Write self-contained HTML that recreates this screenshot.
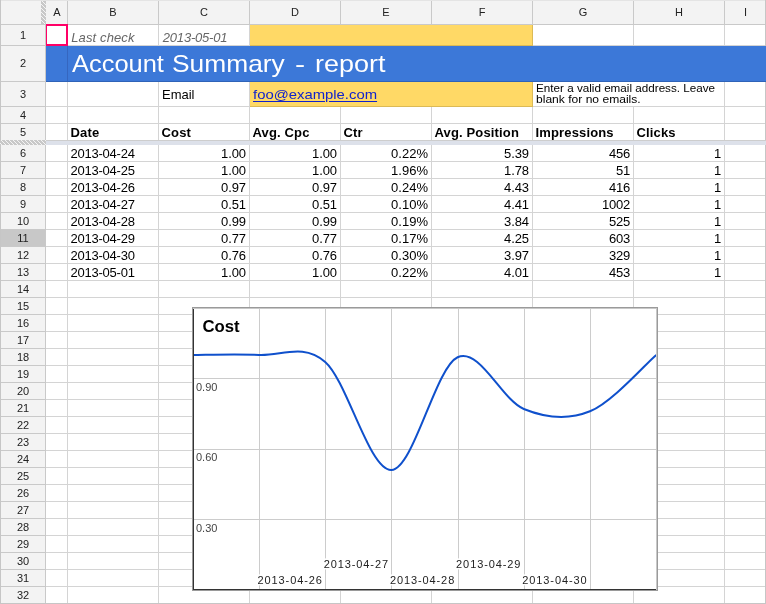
<!DOCTYPE html>
<html><head><meta charset="utf-8"><style>
html,body{margin:0;padding:0;}
body{width:766px;height:604px;overflow:hidden;position:relative;background:#fff;font-family:"Liberation Sans", sans-serif;}
body>div{position:absolute;}
.t{white-space:pre;}
#w{position:absolute;left:0;top:0;width:766px;height:604px;will-change:transform;}
#w>div{position:absolute;}
</style></head><body><div id="w">
<div style="left:0px;top:0px;width:766px;height:24px;background:#f3f3f3;"></div>
<div style="left:0px;top:0px;width:766px;height:1px;background:#e4e4e4;"></div>
<div style="left:0px;top:0px;width:45px;height:604px;background:#f3f3f3;"></div>
<div style="left:0px;top:0px;width:766px;height:1px;background:#e4e4e4;"></div>
<div style="left:1px;top:229px;width:45px;height:18px;background:#c8c8c8;"></div>
<div style="left:250px;top:25px;width:283px;height:21px;background:#ffd966;"></div>
<div style="left:46px;top:46px;width:720px;height:36px;background:#3c78d8;"></div>
<div style="left:250px;top:82px;width:283px;height:25px;background:#ffd966;"></div>
<div style="left:67px;top:1px;width:1px;height:24px;background:#c9c9c9;"></div>
<div style="left:158px;top:1px;width:1px;height:24px;background:#c9c9c9;"></div>
<div style="left:249px;top:1px;width:1px;height:24px;background:#c9c9c9;"></div>
<div style="left:340px;top:1px;width:1px;height:24px;background:#c9c9c9;"></div>
<div style="left:431px;top:1px;width:1px;height:24px;background:#c9c9c9;"></div>
<div style="left:532px;top:1px;width:1px;height:24px;background:#c9c9c9;"></div>
<div style="left:633px;top:1px;width:1px;height:24px;background:#c9c9c9;"></div>
<div style="left:724px;top:1px;width:1px;height:24px;background:#c9c9c9;"></div>
<div style="left:67px;top:25px;width:1px;height:579px;background:#d4d4d4;"></div>
<div style="left:158px;top:25px;width:1px;height:579px;background:#d4d4d4;"></div>
<div style="left:249px;top:25px;width:1px;height:579px;background:#d4d4d4;"></div>
<div style="left:340px;top:25px;width:1px;height:579px;background:#d4d4d4;"></div>
<div style="left:431px;top:25px;width:1px;height:579px;background:#d4d4d4;"></div>
<div style="left:532px;top:25px;width:1px;height:579px;background:#d4d4d4;"></div>
<div style="left:633px;top:25px;width:1px;height:579px;background:#d4d4d4;"></div>
<div style="left:724px;top:25px;width:1px;height:579px;background:#d4d4d4;"></div>
<div style="left:0px;top:24px;width:766px;height:1px;background:#c9c9c9;"></div>
<div style="left:1px;top:45px;width:44px;height:1px;background:#c9c9c9;"></div>
<div style="left:46px;top:45px;width:720px;height:1px;background:#d4d4d4;"></div>
<div style="left:1px;top:81px;width:44px;height:1px;background:#c9c9c9;"></div>
<div style="left:46px;top:81px;width:720px;height:1px;background:#d4d4d4;"></div>
<div style="left:1px;top:106px;width:44px;height:1px;background:#c9c9c9;"></div>
<div style="left:46px;top:106px;width:720px;height:1px;background:#d4d4d4;"></div>
<div style="left:1px;top:123px;width:44px;height:1px;background:#c9c9c9;"></div>
<div style="left:46px;top:123px;width:720px;height:1px;background:#d4d4d4;"></div>
<div style="left:1px;top:161px;width:44px;height:1px;background:#c9c9c9;"></div>
<div style="left:46px;top:161px;width:720px;height:1px;background:#d4d4d4;"></div>
<div style="left:1px;top:178px;width:44px;height:1px;background:#c9c9c9;"></div>
<div style="left:46px;top:178px;width:720px;height:1px;background:#d4d4d4;"></div>
<div style="left:1px;top:195px;width:44px;height:1px;background:#c9c9c9;"></div>
<div style="left:46px;top:195px;width:720px;height:1px;background:#d4d4d4;"></div>
<div style="left:1px;top:212px;width:44px;height:1px;background:#c9c9c9;"></div>
<div style="left:46px;top:212px;width:720px;height:1px;background:#d4d4d4;"></div>
<div style="left:1px;top:229px;width:44px;height:1px;background:#c9c9c9;"></div>
<div style="left:46px;top:229px;width:720px;height:1px;background:#d4d4d4;"></div>
<div style="left:1px;top:246px;width:44px;height:1px;background:#c9c9c9;"></div>
<div style="left:46px;top:246px;width:720px;height:1px;background:#d4d4d4;"></div>
<div style="left:1px;top:263px;width:44px;height:1px;background:#c9c9c9;"></div>
<div style="left:46px;top:263px;width:720px;height:1px;background:#d4d4d4;"></div>
<div style="left:1px;top:280px;width:44px;height:1px;background:#c9c9c9;"></div>
<div style="left:46px;top:280px;width:720px;height:1px;background:#d4d4d4;"></div>
<div style="left:1px;top:297px;width:44px;height:1px;background:#c9c9c9;"></div>
<div style="left:46px;top:297px;width:720px;height:1px;background:#d4d4d4;"></div>
<div style="left:1px;top:314px;width:44px;height:1px;background:#c9c9c9;"></div>
<div style="left:46px;top:314px;width:720px;height:1px;background:#d4d4d4;"></div>
<div style="left:1px;top:331px;width:44px;height:1px;background:#c9c9c9;"></div>
<div style="left:46px;top:331px;width:720px;height:1px;background:#d4d4d4;"></div>
<div style="left:1px;top:348px;width:44px;height:1px;background:#c9c9c9;"></div>
<div style="left:46px;top:348px;width:720px;height:1px;background:#d4d4d4;"></div>
<div style="left:1px;top:365px;width:44px;height:1px;background:#c9c9c9;"></div>
<div style="left:46px;top:365px;width:720px;height:1px;background:#d4d4d4;"></div>
<div style="left:1px;top:382px;width:44px;height:1px;background:#c9c9c9;"></div>
<div style="left:46px;top:382px;width:720px;height:1px;background:#d4d4d4;"></div>
<div style="left:1px;top:399px;width:44px;height:1px;background:#c9c9c9;"></div>
<div style="left:46px;top:399px;width:720px;height:1px;background:#d4d4d4;"></div>
<div style="left:1px;top:416px;width:44px;height:1px;background:#c9c9c9;"></div>
<div style="left:46px;top:416px;width:720px;height:1px;background:#d4d4d4;"></div>
<div style="left:1px;top:433px;width:44px;height:1px;background:#c9c9c9;"></div>
<div style="left:46px;top:433px;width:720px;height:1px;background:#d4d4d4;"></div>
<div style="left:1px;top:450px;width:44px;height:1px;background:#c9c9c9;"></div>
<div style="left:46px;top:450px;width:720px;height:1px;background:#d4d4d4;"></div>
<div style="left:1px;top:467px;width:44px;height:1px;background:#c9c9c9;"></div>
<div style="left:46px;top:467px;width:720px;height:1px;background:#d4d4d4;"></div>
<div style="left:1px;top:484px;width:44px;height:1px;background:#c9c9c9;"></div>
<div style="left:46px;top:484px;width:720px;height:1px;background:#d4d4d4;"></div>
<div style="left:1px;top:501px;width:44px;height:1px;background:#c9c9c9;"></div>
<div style="left:46px;top:501px;width:720px;height:1px;background:#d4d4d4;"></div>
<div style="left:1px;top:518px;width:44px;height:1px;background:#c9c9c9;"></div>
<div style="left:46px;top:518px;width:720px;height:1px;background:#d4d4d4;"></div>
<div style="left:1px;top:535px;width:44px;height:1px;background:#c9c9c9;"></div>
<div style="left:46px;top:535px;width:720px;height:1px;background:#d4d4d4;"></div>
<div style="left:1px;top:552px;width:44px;height:1px;background:#c9c9c9;"></div>
<div style="left:46px;top:552px;width:720px;height:1px;background:#d4d4d4;"></div>
<div style="left:1px;top:569px;width:44px;height:1px;background:#c9c9c9;"></div>
<div style="left:46px;top:569px;width:720px;height:1px;background:#d4d4d4;"></div>
<div style="left:1px;top:586px;width:44px;height:1px;background:#c9c9c9;"></div>
<div style="left:46px;top:586px;width:720px;height:1px;background:#d4d4d4;"></div>
<div style="left:1px;top:603px;width:44px;height:1px;background:#c9c9c9;"></div>
<div style="left:46px;top:603px;width:720px;height:1px;background:#d4d4d4;"></div>
<div style="left:45px;top:25px;width:1px;height:579px;background:#c9c9c9;"></div>
<div style="left:0px;top:0px;width:1px;height:604px;background:#c6c6c6;"></div>
<div style="left:765px;top:0px;width:1px;height:604px;background:#c6c6c6;"></div>
<div style="left:0px;top:603px;width:766px;height:1px;background:#c6c6c6;"></div>
<div style="left:250px;top:25px;width:282px;height:20px;background:#ffd966;"></div>
<div style="left:532px;top:25px;width:1px;height:21px;background:#dcba55;"></div>
<div style="left:250px;top:45px;width:283px;height:1px;background:#dcba55;"></div>
<div style="left:46px;top:46px;width:720px;height:35px;background:#3c78d8;"></div>
<div style="left:46px;top:81px;width:720px;height:1px;background:#2f63b8;"></div>
<div style="left:67px;top:46px;width:1px;height:35px;background:#3566c0;"></div>
<div style="left:250px;top:82px;width:282px;height:24px;background:#ffd966;"></div>
<div style="left:532px;top:82px;width:1px;height:25px;background:#dcba55;"></div>
<div style="left:250px;top:106px;width:283px;height:1px;background:#dcba55;"></div>
<div style="left:633px;top:82px;width:1px;height:24px;background:#ffffff;"></div>
<svg style="position:absolute;left:41px;top:1px" width="5" height="23" shape-rendering="crispEdges"><defs><pattern id="h1" width="4" height="4" patternUnits="userSpaceOnUse"><rect width="4" height="4" fill="#c8c8c8"/><rect x="1" y="0" width="1" height="1" fill="#f4f4f4"/><rect x="2" y="1" width="1" height="1" fill="#f4f4f4"/><rect x="3" y="2" width="1" height="1" fill="#f4f4f4"/><rect x="0" y="3" width="1" height="1" fill="#f4f4f4"/></pattern></defs><rect width="5" height="23" fill="url(#h1)"/></svg>
<svg style="position:absolute;left:0px;top:140px" width="46" height="5" shape-rendering="crispEdges"><defs><pattern id="h2" width="4" height="4" patternUnits="userSpaceOnUse"><rect width="4" height="4" fill="#c8c8c8"/><rect x="1" y="0" width="1" height="1" fill="#f4f4f4"/><rect x="2" y="1" width="1" height="1" fill="#f4f4f4"/><rect x="3" y="2" width="1" height="1" fill="#f4f4f4"/><rect x="0" y="3" width="1" height="1" fill="#f4f4f4"/></pattern></defs><rect width="46" height="5" fill="url(#h2)"/></svg>
<div style="left:46px;top:140px;width:720px;height:1px;background:#cdcdcd;"></div>
<div style="left:46px;top:141px;width:720px;height:4px;background:#dde1ea;"></div>
<div style="left:46px;top:24px;width:19px;height:18px;border:2px solid #ff0066;border-left-width:1px"></div>
<div class="t" style="left:-43.0px;width:200px;text-align:center;top:5.69px;font-size:11px;line-height:13px;color:#222;font-weight:normal;font-style:normal;letter-spacing:0px;">A</div>
<div class="t" style="left:13.0px;width:200px;text-align:center;top:5.69px;font-size:11px;line-height:13px;color:#222;font-weight:normal;font-style:normal;letter-spacing:0px;">B</div>
<div class="t" style="left:104.0px;width:200px;text-align:center;top:5.69px;font-size:11px;line-height:13px;color:#222;font-weight:normal;font-style:normal;letter-spacing:0px;">C</div>
<div class="t" style="left:195.0px;width:200px;text-align:center;top:5.69px;font-size:11px;line-height:13px;color:#222;font-weight:normal;font-style:normal;letter-spacing:0px;">D</div>
<div class="t" style="left:286.0px;width:200px;text-align:center;top:5.69px;font-size:11px;line-height:13px;color:#222;font-weight:normal;font-style:normal;letter-spacing:0px;">E</div>
<div class="t" style="left:382.0px;width:200px;text-align:center;top:5.69px;font-size:11px;line-height:13px;color:#222;font-weight:normal;font-style:normal;letter-spacing:0px;">F</div>
<div class="t" style="left:483.0px;width:200px;text-align:center;top:5.69px;font-size:11px;line-height:13px;color:#222;font-weight:normal;font-style:normal;letter-spacing:0px;">G</div>
<div class="t" style="left:579.0px;width:200px;text-align:center;top:5.69px;font-size:11px;line-height:13px;color:#222;font-weight:normal;font-style:normal;letter-spacing:0px;">H</div>
<div class="t" style="left:645.5px;width:200px;text-align:center;top:5.69px;font-size:11px;line-height:13px;color:#222;font-weight:normal;font-style:normal;letter-spacing:0px;">I</div>
<div class="t" style="left:-77px;width:200px;text-align:center;top:28.69px;font-size:11px;line-height:13px;color:#222;font-weight:normal;font-style:normal;letter-spacing:0px;">1</div>
<div class="t" style="left:-77px;width:200px;text-align:center;top:57.19px;font-size:11px;line-height:13px;color:#222;font-weight:normal;font-style:normal;letter-spacing:0px;">2</div>
<div class="t" style="left:-77px;width:200px;text-align:center;top:87.69px;font-size:11px;line-height:13px;color:#222;font-weight:normal;font-style:normal;letter-spacing:0px;">3</div>
<div class="t" style="left:-77px;width:200px;text-align:center;top:108.69px;font-size:11px;line-height:13px;color:#222;font-weight:normal;font-style:normal;letter-spacing:0px;">4</div>
<div class="t" style="left:-77px;width:200px;text-align:center;top:125.69px;font-size:11px;line-height:13px;color:#222;font-weight:normal;font-style:normal;letter-spacing:0px;">5</div>
<div class="t" style="left:-77px;width:200px;text-align:center;top:146.69px;font-size:11px;line-height:13px;color:#222;font-weight:normal;font-style:normal;letter-spacing:0px;">6</div>
<div class="t" style="left:-77px;width:200px;text-align:center;top:163.69px;font-size:11px;line-height:13px;color:#222;font-weight:normal;font-style:normal;letter-spacing:0px;">7</div>
<div class="t" style="left:-77px;width:200px;text-align:center;top:180.69px;font-size:11px;line-height:13px;color:#222;font-weight:normal;font-style:normal;letter-spacing:0px;">8</div>
<div class="t" style="left:-77px;width:200px;text-align:center;top:197.69px;font-size:11px;line-height:13px;color:#222;font-weight:normal;font-style:normal;letter-spacing:0px;">9</div>
<div class="t" style="left:-77px;width:200px;text-align:center;top:214.69px;font-size:11px;line-height:13px;color:#222;font-weight:normal;font-style:normal;letter-spacing:0px;">10</div>
<div class="t" style="left:-77px;width:200px;text-align:center;top:231.69px;font-size:11px;line-height:13px;color:#222;font-weight:normal;font-style:normal;letter-spacing:0px;">11</div>
<div class="t" style="left:-77px;width:200px;text-align:center;top:248.69px;font-size:11px;line-height:13px;color:#222;font-weight:normal;font-style:normal;letter-spacing:0px;">12</div>
<div class="t" style="left:-77px;width:200px;text-align:center;top:265.69px;font-size:11px;line-height:13px;color:#222;font-weight:normal;font-style:normal;letter-spacing:0px;">13</div>
<div class="t" style="left:-77px;width:200px;text-align:center;top:282.69px;font-size:11px;line-height:13px;color:#222;font-weight:normal;font-style:normal;letter-spacing:0px;">14</div>
<div class="t" style="left:-77px;width:200px;text-align:center;top:299.69px;font-size:11px;line-height:13px;color:#222;font-weight:normal;font-style:normal;letter-spacing:0px;">15</div>
<div class="t" style="left:-77px;width:200px;text-align:center;top:316.69px;font-size:11px;line-height:13px;color:#222;font-weight:normal;font-style:normal;letter-spacing:0px;">16</div>
<div class="t" style="left:-77px;width:200px;text-align:center;top:333.69px;font-size:11px;line-height:13px;color:#222;font-weight:normal;font-style:normal;letter-spacing:0px;">17</div>
<div class="t" style="left:-77px;width:200px;text-align:center;top:350.69px;font-size:11px;line-height:13px;color:#222;font-weight:normal;font-style:normal;letter-spacing:0px;">18</div>
<div class="t" style="left:-77px;width:200px;text-align:center;top:367.69px;font-size:11px;line-height:13px;color:#222;font-weight:normal;font-style:normal;letter-spacing:0px;">19</div>
<div class="t" style="left:-77px;width:200px;text-align:center;top:384.69px;font-size:11px;line-height:13px;color:#222;font-weight:normal;font-style:normal;letter-spacing:0px;">20</div>
<div class="t" style="left:-77px;width:200px;text-align:center;top:401.69px;font-size:11px;line-height:13px;color:#222;font-weight:normal;font-style:normal;letter-spacing:0px;">21</div>
<div class="t" style="left:-77px;width:200px;text-align:center;top:418.69px;font-size:11px;line-height:13px;color:#222;font-weight:normal;font-style:normal;letter-spacing:0px;">22</div>
<div class="t" style="left:-77px;width:200px;text-align:center;top:435.69px;font-size:11px;line-height:13px;color:#222;font-weight:normal;font-style:normal;letter-spacing:0px;">23</div>
<div class="t" style="left:-77px;width:200px;text-align:center;top:452.69px;font-size:11px;line-height:13px;color:#222;font-weight:normal;font-style:normal;letter-spacing:0px;">24</div>
<div class="t" style="left:-77px;width:200px;text-align:center;top:469.69px;font-size:11px;line-height:13px;color:#222;font-weight:normal;font-style:normal;letter-spacing:0px;">25</div>
<div class="t" style="left:-77px;width:200px;text-align:center;top:486.69px;font-size:11px;line-height:13px;color:#222;font-weight:normal;font-style:normal;letter-spacing:0px;">26</div>
<div class="t" style="left:-77px;width:200px;text-align:center;top:503.69px;font-size:11px;line-height:13px;color:#222;font-weight:normal;font-style:normal;letter-spacing:0px;">27</div>
<div class="t" style="left:-77px;width:200px;text-align:center;top:520.69px;font-size:11px;line-height:13px;color:#222;font-weight:normal;font-style:normal;letter-spacing:0px;">28</div>
<div class="t" style="left:-77px;width:200px;text-align:center;top:537.69px;font-size:11px;line-height:13px;color:#222;font-weight:normal;font-style:normal;letter-spacing:0px;">29</div>
<div class="t" style="left:-77px;width:200px;text-align:center;top:554.69px;font-size:11px;line-height:13px;color:#222;font-weight:normal;font-style:normal;letter-spacing:0px;">30</div>
<div class="t" style="left:-77px;width:200px;text-align:center;top:571.69px;font-size:11px;line-height:13px;color:#222;font-weight:normal;font-style:normal;letter-spacing:0px;">31</div>
<div class="t" style="left:-77px;width:200px;text-align:center;top:588.69px;font-size:11px;line-height:13px;color:#222;font-weight:normal;font-style:normal;letter-spacing:0px;">32</div>
<div class="t" style="left:71.2px;top:29.50px;font-size:13px;line-height:15px;color:#666;font-weight:normal;font-style:italic;letter-spacing:0.13px;">Last check</div>
<div class="t" style="left:162.8px;top:29.50px;font-size:13px;line-height:15px;color:#666;font-weight:normal;font-style:italic;letter-spacing:-0.2px;">2013-05-01</div>
<div class="t" style="left:72.00px;top:50.18px;font-size:24px;line-height:28px;color:#fff;transform:scaleX(1.0598);transform-origin:0 0;">Account</div>
<div class="t" style="left:172.00px;top:50.18px;font-size:24px;line-height:28px;color:#fff;transform:scaleX(1.098);transform-origin:0 0;">Summary</div>
<div class="t" style="left:295.33px;top:50.18px;font-size:24px;line-height:28px;color:#fff;transform:scaleX(1.2667);transform-origin:0 0;">-</div>
<div class="t" style="left:314.78px;top:50.18px;font-size:24px;line-height:28px;color:#fff;transform:scaleX(1.1226);transform-origin:0 0;">report</div>
<div class="t" style="left:162px;top:87.00px;font-size:13px;line-height:15px;color:#000;font-weight:normal;font-style:normal;letter-spacing:0px;">Email</div>
<div class="t" style="left:253.30px;top:87.00px;font-size:13px;line-height:15px;color:#1122cc;transform:scaleX(1.1426);transform-origin:0 0;text-decoration:underline;text-underline-offset:1.6px;">foo@example.com</div>
<div class="t" style="left:535.88px;top:82.90px;font-size:10.4px;line-height:12px;color:#000;transform:scaleX(1.1234);transform-origin:0 0;">Enter a valid email address. Leave</div>
<div class="t" style="left:535.84px;top:94.40px;font-size:10.4px;line-height:12px;color:#000;transform:scaleX(1.1614);transform-origin:0 0;">blank for no emails.</div>
<div class="t" style="left:70.5px;top:125.00px;font-size:13px;line-height:15px;color:#000;font-weight:bold;font-style:normal;letter-spacing:0.15px;">Date</div>
<div class="t" style="left:161.5px;top:125.00px;font-size:13px;line-height:15px;color:#000;font-weight:bold;font-style:normal;letter-spacing:0.15px;">Cost</div>
<div class="t" style="left:252.5px;top:125.00px;font-size:13px;line-height:15px;color:#000;font-weight:bold;font-style:normal;letter-spacing:0.15px;">Avg. Cpc</div>
<div class="t" style="left:343.5px;top:125.00px;font-size:13px;line-height:15px;color:#000;font-weight:bold;font-style:normal;letter-spacing:0.15px;">Ctr</div>
<div class="t" style="left:434.5px;top:125.00px;font-size:13px;line-height:15px;color:#000;font-weight:bold;font-style:normal;letter-spacing:0.15px;">Avg. Position</div>
<div class="t" style="left:535.5px;top:125.00px;font-size:13px;line-height:15px;color:#000;font-weight:bold;font-style:normal;letter-spacing:0.15px;">Impressions</div>
<div class="t" style="left:636.5px;top:125.00px;font-size:13px;line-height:15px;color:#000;font-weight:bold;font-style:normal;letter-spacing:0.15px;">Clicks</div>
<div class="t" style="left:70.6px;top:145.80px;font-size:13px;line-height:15px;color:#000;font-weight:normal;font-style:normal;letter-spacing:-0.248px;">2013-04-24</div>
<div class="t" style="right:520px;top:145.80px;font-size:13px;line-height:15px;color:#000;font-weight:normal;font-style:normal;letter-spacing:-0.075px;">1.00</div>
<div class="t" style="right:429px;top:145.80px;font-size:13px;line-height:15px;color:#000;font-weight:normal;font-style:normal;letter-spacing:-0.075px;">1.00</div>
<div class="t" style="right:338px;top:145.80px;font-size:13px;line-height:15px;color:#000;font-weight:normal;font-style:normal;letter-spacing:0.029px;">0.22%</div>
<div class="t" style="right:237px;top:145.80px;font-size:13px;line-height:15px;color:#000;font-weight:normal;font-style:normal;letter-spacing:-0.075px;">5.39</div>
<div class="t" style="right:136px;top:145.80px;font-size:13px;line-height:15px;color:#000;font-weight:normal;font-style:normal;letter-spacing:-0.228px;">456</div>
<div class="t" style="right:45px;top:145.80px;font-size:13px;line-height:15px;color:#000;font-weight:normal;font-style:normal;letter-spacing:-0.228px;">1</div>
<div class="t" style="left:70.6px;top:162.80px;font-size:13px;line-height:15px;color:#000;font-weight:normal;font-style:normal;letter-spacing:-0.248px;">2013-04-25</div>
<div class="t" style="right:520px;top:162.80px;font-size:13px;line-height:15px;color:#000;font-weight:normal;font-style:normal;letter-spacing:-0.075px;">1.00</div>
<div class="t" style="right:429px;top:162.80px;font-size:13px;line-height:15px;color:#000;font-weight:normal;font-style:normal;letter-spacing:-0.075px;">1.00</div>
<div class="t" style="right:338px;top:162.80px;font-size:13px;line-height:15px;color:#000;font-weight:normal;font-style:normal;letter-spacing:0.029px;">1.96%</div>
<div class="t" style="right:237px;top:162.80px;font-size:13px;line-height:15px;color:#000;font-weight:normal;font-style:normal;letter-spacing:-0.075px;">1.78</div>
<div class="t" style="right:136px;top:162.80px;font-size:13px;line-height:15px;color:#000;font-weight:normal;font-style:normal;letter-spacing:-0.228px;">51</div>
<div class="t" style="right:45px;top:162.80px;font-size:13px;line-height:15px;color:#000;font-weight:normal;font-style:normal;letter-spacing:-0.228px;">1</div>
<div class="t" style="left:70.6px;top:179.80px;font-size:13px;line-height:15px;color:#000;font-weight:normal;font-style:normal;letter-spacing:-0.248px;">2013-04-26</div>
<div class="t" style="right:520px;top:179.80px;font-size:13px;line-height:15px;color:#000;font-weight:normal;font-style:normal;letter-spacing:-0.075px;">0.97</div>
<div class="t" style="right:429px;top:179.80px;font-size:13px;line-height:15px;color:#000;font-weight:normal;font-style:normal;letter-spacing:-0.075px;">0.97</div>
<div class="t" style="right:338px;top:179.80px;font-size:13px;line-height:15px;color:#000;font-weight:normal;font-style:normal;letter-spacing:0.029px;">0.24%</div>
<div class="t" style="right:237px;top:179.80px;font-size:13px;line-height:15px;color:#000;font-weight:normal;font-style:normal;letter-spacing:-0.075px;">4.43</div>
<div class="t" style="right:136px;top:179.80px;font-size:13px;line-height:15px;color:#000;font-weight:normal;font-style:normal;letter-spacing:-0.228px;">416</div>
<div class="t" style="right:45px;top:179.80px;font-size:13px;line-height:15px;color:#000;font-weight:normal;font-style:normal;letter-spacing:-0.228px;">1</div>
<div class="t" style="left:70.6px;top:196.80px;font-size:13px;line-height:15px;color:#000;font-weight:normal;font-style:normal;letter-spacing:-0.248px;">2013-04-27</div>
<div class="t" style="right:520px;top:196.80px;font-size:13px;line-height:15px;color:#000;font-weight:normal;font-style:normal;letter-spacing:-0.075px;">0.51</div>
<div class="t" style="right:429px;top:196.80px;font-size:13px;line-height:15px;color:#000;font-weight:normal;font-style:normal;letter-spacing:-0.075px;">0.51</div>
<div class="t" style="right:338px;top:196.80px;font-size:13px;line-height:15px;color:#000;font-weight:normal;font-style:normal;letter-spacing:0.029px;">0.10%</div>
<div class="t" style="right:237px;top:196.80px;font-size:13px;line-height:15px;color:#000;font-weight:normal;font-style:normal;letter-spacing:-0.075px;">4.41</div>
<div class="t" style="right:136px;top:196.80px;font-size:13px;line-height:15px;color:#000;font-weight:normal;font-style:normal;letter-spacing:-0.228px;">1002</div>
<div class="t" style="right:45px;top:196.80px;font-size:13px;line-height:15px;color:#000;font-weight:normal;font-style:normal;letter-spacing:-0.228px;">1</div>
<div class="t" style="left:70.6px;top:213.80px;font-size:13px;line-height:15px;color:#000;font-weight:normal;font-style:normal;letter-spacing:-0.248px;">2013-04-28</div>
<div class="t" style="right:520px;top:213.80px;font-size:13px;line-height:15px;color:#000;font-weight:normal;font-style:normal;letter-spacing:-0.075px;">0.99</div>
<div class="t" style="right:429px;top:213.80px;font-size:13px;line-height:15px;color:#000;font-weight:normal;font-style:normal;letter-spacing:-0.075px;">0.99</div>
<div class="t" style="right:338px;top:213.80px;font-size:13px;line-height:15px;color:#000;font-weight:normal;font-style:normal;letter-spacing:0.029px;">0.19%</div>
<div class="t" style="right:237px;top:213.80px;font-size:13px;line-height:15px;color:#000;font-weight:normal;font-style:normal;letter-spacing:-0.075px;">3.84</div>
<div class="t" style="right:136px;top:213.80px;font-size:13px;line-height:15px;color:#000;font-weight:normal;font-style:normal;letter-spacing:-0.228px;">525</div>
<div class="t" style="right:45px;top:213.80px;font-size:13px;line-height:15px;color:#000;font-weight:normal;font-style:normal;letter-spacing:-0.228px;">1</div>
<div class="t" style="left:70.6px;top:230.80px;font-size:13px;line-height:15px;color:#000;font-weight:normal;font-style:normal;letter-spacing:-0.248px;">2013-04-29</div>
<div class="t" style="right:520px;top:230.80px;font-size:13px;line-height:15px;color:#000;font-weight:normal;font-style:normal;letter-spacing:-0.075px;">0.77</div>
<div class="t" style="right:429px;top:230.80px;font-size:13px;line-height:15px;color:#000;font-weight:normal;font-style:normal;letter-spacing:-0.075px;">0.77</div>
<div class="t" style="right:338px;top:230.80px;font-size:13px;line-height:15px;color:#000;font-weight:normal;font-style:normal;letter-spacing:0.029px;">0.17%</div>
<div class="t" style="right:237px;top:230.80px;font-size:13px;line-height:15px;color:#000;font-weight:normal;font-style:normal;letter-spacing:-0.075px;">4.25</div>
<div class="t" style="right:136px;top:230.80px;font-size:13px;line-height:15px;color:#000;font-weight:normal;font-style:normal;letter-spacing:-0.228px;">603</div>
<div class="t" style="right:45px;top:230.80px;font-size:13px;line-height:15px;color:#000;font-weight:normal;font-style:normal;letter-spacing:-0.228px;">1</div>
<div class="t" style="left:70.6px;top:247.80px;font-size:13px;line-height:15px;color:#000;font-weight:normal;font-style:normal;letter-spacing:-0.248px;">2013-04-30</div>
<div class="t" style="right:520px;top:247.80px;font-size:13px;line-height:15px;color:#000;font-weight:normal;font-style:normal;letter-spacing:-0.075px;">0.76</div>
<div class="t" style="right:429px;top:247.80px;font-size:13px;line-height:15px;color:#000;font-weight:normal;font-style:normal;letter-spacing:-0.075px;">0.76</div>
<div class="t" style="right:338px;top:247.80px;font-size:13px;line-height:15px;color:#000;font-weight:normal;font-style:normal;letter-spacing:0.029px;">0.30%</div>
<div class="t" style="right:237px;top:247.80px;font-size:13px;line-height:15px;color:#000;font-weight:normal;font-style:normal;letter-spacing:-0.075px;">3.97</div>
<div class="t" style="right:136px;top:247.80px;font-size:13px;line-height:15px;color:#000;font-weight:normal;font-style:normal;letter-spacing:-0.228px;">329</div>
<div class="t" style="right:45px;top:247.80px;font-size:13px;line-height:15px;color:#000;font-weight:normal;font-style:normal;letter-spacing:-0.228px;">1</div>
<div class="t" style="left:70.6px;top:264.80px;font-size:13px;line-height:15px;color:#000;font-weight:normal;font-style:normal;letter-spacing:-0.248px;">2013-05-01</div>
<div class="t" style="right:520px;top:264.80px;font-size:13px;line-height:15px;color:#000;font-weight:normal;font-style:normal;letter-spacing:-0.075px;">1.00</div>
<div class="t" style="right:429px;top:264.80px;font-size:13px;line-height:15px;color:#000;font-weight:normal;font-style:normal;letter-spacing:-0.075px;">1.00</div>
<div class="t" style="right:338px;top:264.80px;font-size:13px;line-height:15px;color:#000;font-weight:normal;font-style:normal;letter-spacing:0.029px;">0.22%</div>
<div class="t" style="right:237px;top:264.80px;font-size:13px;line-height:15px;color:#000;font-weight:normal;font-style:normal;letter-spacing:-0.075px;">4.01</div>
<div class="t" style="right:136px;top:264.80px;font-size:13px;line-height:15px;color:#000;font-weight:normal;font-style:normal;letter-spacing:-0.228px;">453</div>
<div class="t" style="right:45px;top:264.80px;font-size:13px;line-height:15px;color:#000;font-weight:normal;font-style:normal;letter-spacing:-0.228px;">1</div>
<svg style="position:absolute;left:192px;top:307px" width="466" height="284" viewBox="0 0 466 284" font-family='"Liberation Sans", sans-serif'><rect x="0" y="0" width="466" height="284" fill="#fff"/><line x1="67.5" y1="2" x2="67.5" y2="282" stroke="#cccccc" stroke-width="1"/><line x1="133.5" y1="2" x2="133.5" y2="282" stroke="#cccccc" stroke-width="1"/><line x1="199.5" y1="2" x2="199.5" y2="282" stroke="#cccccc" stroke-width="1"/><line x1="266.5" y1="2" x2="266.5" y2="282" stroke="#cccccc" stroke-width="1"/><line x1="332.5" y1="2" x2="332.5" y2="282" stroke="#cccccc" stroke-width="1"/><line x1="398.5" y1="2" x2="398.5" y2="282" stroke="#cccccc" stroke-width="1"/><line x1="2" y1="71.5" x2="464" y2="71.5" stroke="#cccccc" stroke-width="1"/><line x1="2" y1="142.5" x2="464" y2="142.5" stroke="#cccccc" stroke-width="1"/><line x1="2" y1="212.5" x2="464" y2="212.5" stroke="#cccccc" stroke-width="1"/><path d="M0.80,47.90 C11.83,47.90 44.93,46.72 67.00,47.90 C89.07,49.07 111.13,35.76 133.20,54.95 C155.27,74.14 177.33,163.83 199.40,163.05 C221.47,162.27 243.53,60.43 265.60,50.25 C287.67,40.07 309.73,92.94 331.80,101.95 C353.87,110.96 375.93,113.31 398.00,104.30 C420.07,95.29 453.17,57.30 464.20,47.90" fill="none" stroke="#0f50cc" stroke-width="2"/><text x="4" y="84.19999999999999" font-size="11" fill="#444">0.90</text><text x="4" y="154.2" font-size="11" fill="#444">0.60</text><text x="4" y="225.20000000000005" font-size="11" fill="#444">0.30</text><text transform="translate(10.449999999999989,24.69999999999999) scale(1.0471,1)" font-size="16" font-weight="bold" fill="#000">Cost</text><rect x="64.70" y="267.40" width="65" height="11" fill="#fff"/><text x="65.50" y="277" font-size="11" fill="#222" letter-spacing="0.9">2013-04-26</text><rect x="130.90" y="251.40" width="65" height="11" fill="#fff"/><text x="131.70" y="261" font-size="11" fill="#222" letter-spacing="0.9">2013-04-27</text><rect x="197.10" y="267.40" width="65" height="11" fill="#fff"/><text x="197.90" y="277" font-size="11" fill="#222" letter-spacing="0.9">2013-04-28</text><rect x="263.30" y="251.40" width="65" height="11" fill="#fff"/><text x="264.10" y="261" font-size="11" fill="#222" letter-spacing="0.9">2013-04-29</text><rect x="329.50" y="267.40" width="65" height="11" fill="#fff"/><text x="330.30" y="277" font-size="11" fill="#222" letter-spacing="0.9">2013-04-30</text><rect x="0.5" y="0.5" width="465" height="283" fill="none" stroke="#9a9a9a" stroke-width="1"/><line x1="1.5" y1="1" x2="1.5" y2="283" stroke="#333" stroke-width="1"/><line x1="1" y1="282.5" x2="465" y2="282.5" stroke="#333" stroke-width="1"/><line x1="1" y1="1.5" x2="465" y2="1.5" stroke="#c8c8c8" stroke-width="1"/><line x1="464.5" y1="1" x2="464.5" y2="283" stroke="#c8c8c8" stroke-width="1"/></svg>
</div></body></html>
